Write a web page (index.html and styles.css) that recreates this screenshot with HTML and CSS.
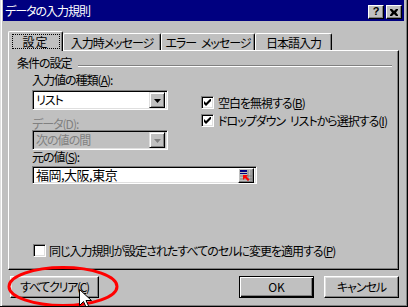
FILE: index.html
```html
<!DOCTYPE html>
<html lang="ja">
<head>
<meta charset="utf-8">
<title>データの入力規則</title>
<link rel="stylesheet" href="styles.css">
</head>
<body>
<div class="window">
  <div class="titlebar">
    <span class="title">データの入力規則</span>
    <div class="caption-btns">
      <span class="cbtn help">?</span>
      <span class="cbtn close"><svg width="8" height="7" viewBox="0 0 8 7"><path d="M0 0h2l2 2 2-2h2v1l-2 2.5 2 2.5v1h-2l-2-2-2 2h-2v-1l2-2.5-2-2.5z" fill="#000"/></svg></span>
    </div>
  </div>

  <div class="tabs">
    <div class="tab active t1"><span class="focus">設定</span></div>
    <div class="tab t2">入力時メッセージ</div>
    <div class="tab t3">エラー メッセージ</div>
    <div class="tab t4">日本語入力</div>
  </div>

  <div class="panel">
    <div class="group-title"><span>条件の設定</span><span class="rule"></span></div>
    <div class="criteria">
      <div class="criteria-top">
        <div class="col-left">
          <div class="lbl l1">入力値の種類(<u>A</u>):</div>
          <div class="combo">
            <span class="val">リスト</span>
            <span class="ddbtn"><svg width="7" height="4" viewBox="0 0 7 4"><path d="M0 0h7L3.5 4z" fill="#000"/></svg></span>
          </div>
          <div class="lbl l2 disabled">データ(<u>D</u>):</div>
          <div class="combo off">
            <span class="val">次の値の間</span>
            <span class="ddbtn"><svg width="7" height="4" viewBox="0 0 7 4"><path d="M0 0h7L3.5 4z" fill="#808080"/></svg></span>
          </div>
        </div>
        <div class="col-right">
          <div class="chk"><span class="box"><svg width="7" height="7" viewBox="0 0 7 7"><path d="M0 2l2 2 5-5v3l-5 5-2-2z" fill="#000"/></svg></span><span>空白を無視する(<u>B</u>)</span></div>
          <div class="chk"><span class="box"><svg width="7" height="7" viewBox="0 0 7 7"><path d="M0 2l2 2 5-5v3l-5 5-2-2z" fill="#000"/></svg></span><span>ドロップダウン リストから選択する(<u>I</u>)</span></div>
        </div>
      </div>
      <div class="lbl l3">元の値(<u>S</u>):</div>
      <div class="edit">
        <span class="val">福岡,大阪,東京</span>
        <span class="refbtn"><svg width="12" height="11" viewBox="0 0 12 11">
          <rect x="0" y="0" width="7" height="2" fill="#000080"/>
          <rect x="0" y="3" width="7" height="1" fill="#000080"/>
          <path d="M8 0v11M11 0v11M0 6h12M0 9h12" stroke="#808080" stroke-width="1"/>
          <path d="M3 5l5 0-1.5 1.5 3 3-1.5 1.5-3-3L3 10z" fill="#ff0000"/>
        </svg></span>
      </div>
    </div>
    <div class="chk apply"><span class="box"></span><span>同じ入力規則が設定されたすべてのセルに変更を適用する(<u>P</u>)</span></div>
  </div>

  <div class="buttons">
    <button class="btn clear">すべてクリア(<u>C</u>)</button>
    <button class="btn default">OK</button>
    <button class="btn cancel">キャンセル</button>
  </div>

  <svg class="highlight" width="114" height="44" viewBox="0 0 114 44"><ellipse cx="57" cy="21.5" rx="54" ry="19" fill="none" stroke="#ff0000" stroke-width="3"/></svg>
  <svg class="cursor" width="13" height="20" viewBox="0 0 13 20"><path d="M0.5 0.5v16l4-4 3 6.5 2.5-1-3-6.5h5.5z" fill="#fff" stroke="#000" stroke-width="1"/></svg>
</div>
</body>
</html>
```

FILE: styles.css
```css
* { box-sizing: border-box; }

html, body {
  margin: 0;
  padding: 0;
  background: #c0c0c0;
}

body {
  font-family: "Noto Sans CJK JP", "MS UI Gothic", sans-serif;
  font-size: 12px;
  line-height: 12px;
  letter-spacing: -1px;
  word-spacing: 3px;
  color: #000;
  font-feature-settings: "palt";
}

u { text-decoration: underline; text-underline-offset: 1px; }

.window {
  position: relative;
  width: 408px;
  height: 307px;
  background: #c0c0c0;
  overflow: hidden;
  border-right: 1px solid #000;
  border-bottom: 1px solid #000;
  box-shadow: inset 1px 0 #dfdfdf, inset 2px 0 #fff, inset -1px -1px #808080;
  display: flex;
  flex-direction: column;
}

/* title bar */
.titlebar {
  margin-left: 3px;
  width: 401px;
  height: 21px;
  background: #000080;
  display: flex;
  align-items: flex-start;
  justify-content: space-between;
}
.title {
  color: #fff;
  margin-top: 5px;
  margin-left: 2px;
}
.caption-btns {
  display: flex;
  gap: 2px;
  margin-top: 5px;
  margin-right: 2px;
}
.cbtn {
  width: 16px;
  height: 14px;
  background: #c0c0c0;
  border-top: 1px solid #fff;
  border-left: 1px solid #fff;
  border-right: 1px solid #000;
  border-bottom: 1px solid #000;
  box-shadow: inset -1px -1px #808080;
  display: flex;
  align-items: center;
  justify-content: center;
  letter-spacing: 0;
}
.help {
  font-family: "Liberation Sans", sans-serif;
  font-weight: bold;
  font-size: 11px;
  line-height: 11px;
  padding-bottom: 1px;
}

/* tabs */
.tabs {
  display: flex;
  align-items: flex-end;
  margin-top: 10px;
  margin-left: 8px;
  height: 19px;
  position: relative;
  z-index: 1;
}
.tab {
  height: 17px;
  background: #c0c0c0;
  border-top: 1px solid #fff;
  border-left: 1px solid #fff;
  border-right: 1px solid #000;
  box-shadow: inset -1px 0 #808080;
  border-radius: 2px 2px 0 0;
  display: flex;
  align-items: center;
  justify-content: center;
  padding-top: 1px;
}
.tab.active {
  height: 20px;
  margin-bottom: -1px;
  padding-top: 0;
  padding-bottom: 1px;
}
.t1 { width: 55px; }
.t2 { width: 98px; }
.t3 { width: 94px; }
.t4 { width: 77px; }
.focus {
  display: inline-block;
  width: 48px;
  height: 15px;
  border: 1px dotted #000;
  text-align: center;
  line-height: 13px;
  letter-spacing: 1px;
}

/* panel */
.panel {
  margin-left: 8px;
  width: 391px;
  height: 220px;
  border-top: 1px solid #fff;
  border-left: 1px solid #fff;
  border-right: 1px solid #000;
  border-bottom: 1px solid #000;
  box-shadow: inset -1px -1px #808080;
  padding: 5px 6px 12px 8px;
  display: flex;
  flex-direction: column;
}
.group-title {
  display: flex;
  align-items: flex-start;
  height: 13px;
  line-height: 13px;
}
.rule {
  flex: 1;
  margin-top: 9px;
  margin-left: 6px;
  height: 2px;
  border-top: 1px solid #808080;
  border-bottom: 1px solid #fff;
}

.criteria {
  display: flex;
  flex-direction: column;
  margin-left: 15px;
}
.criteria-top { display: flex; }
.col-left {
  width: 136px;
  display: flex;
  flex-direction: column;
}
.lbl { height: 12px; line-height: 12px; }
.lbl.l1 { margin-top: 5px; }
.lbl.l2 { margin-top: 8px; }
.lbl.l3 { margin-top: 1px; }
.disabled { color: #808080; }

.combo, .edit {
  background: #fff;
  border-top: 1px solid #808080;
  border-left: 1px solid #808080;
  border-right: 1px solid #fff;
  border-bottom: 1px solid #fff;
  box-shadow: inset 1px 1px #000, inset -1px -1px #dfdfdf;
  display: flex;
  align-items: center;
  justify-content: space-between;
  padding: 2px;
}
.combo {
  width: 136px;
  height: 20px;
  margin-top: 4px;
}
.combo.off { margin-top: 0; background: #c0c0c0; color: #808080; }
.combo .val { padding-left: 1px; }
.ddbtn {
  width: 16px;
  height: 16px;
  background: #c0c0c0;
  border-top: 1px solid #dfdfdf;
  border-left: 1px solid #dfdfdf;
  border-right: 1px solid #000;
  border-bottom: 1px solid #000;
  box-shadow: inset 1px 1px #fff, inset -1px -1px #808080;
  display: flex;
  align-items: center;
  justify-content: center;
  padding-top: 1px;
}
.edit {
  width: 225px;
  height: 18px;
  margin-top: 3px;
  padding: 1px 2px 1px 3px;
}
.edit .val { font-size: 13px; letter-spacing: -0.5px; }
.refbtn {
  width: 16px;
  height: 15px;
  background: #c0c0c0;
  border-top: 1px solid #fff;
  border-left: 1px solid #fff;
  border-right: 1px solid #000;
  border-bottom: 1px solid #000;
  box-shadow: inset -1px -1px #808080;
  display: flex;
  align-items: center;
  justify-content: center;
}

.col-right {
  margin-left: 33px;
  margin-top: 27px;
  display: flex;
  flex-direction: column;
  gap: 5px;
}
.chk {
  display: flex;
  align-items: center;
  gap: 3px;
  height: 13px;
  white-space: nowrap;
}
.box {
  width: 13px;
  height: 13px;
  background: #fff;
  border-top: 1px solid #808080;
  border-left: 1px solid #808080;
  border-right: 1px solid #fff;
  border-bottom: 1px solid #fff;
  box-shadow: inset 1px 1px #000, inset -1px -1px #dfdfdf;
  display: flex;
  align-items: center;
  justify-content: center;
  flex: none;
}
.chk .box + span { margin-left: 1px; }
.apply {
  margin-top: auto;
  margin-left: 16px;
  gap: 2px;
}

/* buttons */
.buttons {
  display: flex;
  margin-top: 6px;
  padding-left: 10px;
  padding-right: 8px;
  gap: 10px;
}
.btn {
  font: inherit;
  letter-spacing: -1px;
  font-feature-settings: "palt";
  color: #000;
  height: 22px;
  background: #c0c0c0;
  border-top: 1px solid #fff;
  border-left: 1px solid #fff;
  border-right: 1px solid #000;
  border-bottom: 1px solid #000;
  box-shadow: inset -1px -1px #808080, inset 1px 1px #dfdfdf;
  padding: 0;
  margin: 0;
  display: flex;
  align-items: center;
  justify-content: center;
}
.clear { width: 89px; margin-right: auto; letter-spacing: -1.3px; }
.default {
  width: 75px;
  border: 1px solid #000;
  box-shadow: inset 1px 1px #fff, inset -1px -1px #000, inset -2px -2px #808080;
  letter-spacing: 0;
}
.cancel { width: 75px; }

/* overlays */
.highlight {
  position: absolute;
  left: 6px;
  top: 265px;
}
.cursor {
  position: absolute;
  left: 79px;
  top: 289px;
}
```
